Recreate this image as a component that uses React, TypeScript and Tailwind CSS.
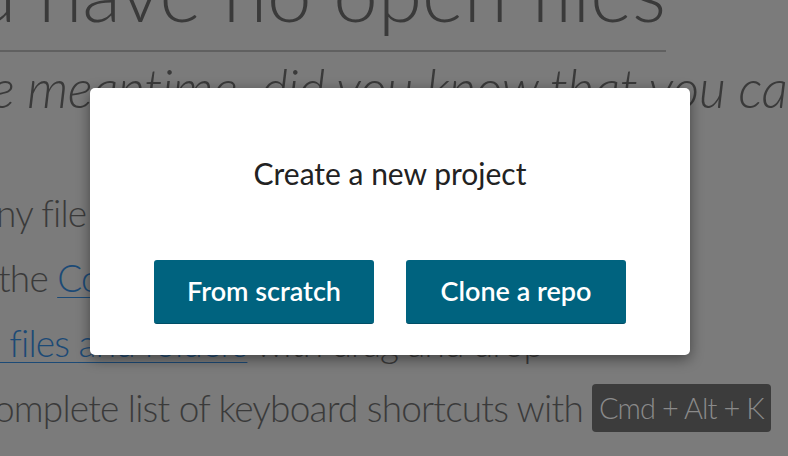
import React from 'react';

const ProjectModal: React.FC = () => {
  return (
    <div className="absolute left-[90px] top-[88px] w-[600px] h-[267px] bg-white rounded-[5px] shadow-[0_4px_14px_rgba(0,0,0,0.45)] flex flex-col items-center">
      <h2 className="mt-[67px] text-[30px] leading-[36px] text-[#222222]">Create a new project</h2>
      <div className="mt-[69px] flex gap-8">
        <button className="w-[220px] h-[64px] rounded-[3px] bg-[#00637f] border-b border-[#004e66] text-white text-[27px] font-semibold">
          From scratch
        </button>
        <button className="w-[220px] h-[64px] rounded-[3px] bg-[#00637f] border-b border-[#004e66] text-white text-[27px] font-semibold">
          Clone a repo
        </button>
      </div>
    </div>
  );
};

export default function App() {
  return (
    <div className="relative w-[788px] h-[456px] overflow-hidden bg-[#7b7b7b] text-[#3a3a3a] font-['Lato','Liberation_Sans',sans-serif]">
      <div className="flex flex-col">
        <div className="mt-[-49px] flex w-[666px] justify-end">
          <h1 className="whitespace-nowrap text-[80px] leading-none font-light">You have no open files</h1>
        </div>
        <div className="mt-[19px] w-[666px] h-[2px] bg-[#606060]" />
        <p className="mt-[9px] -ml-[10px] whitespace-nowrap text-[53px] leading-none font-light italic tracking-[-0.6px]">
          e meantime, did you know that you can:
        </p>
        <ul className="mt-[66px] text-[37px] leading-[65px] font-light whitespace-nowrap tracking-[-0.8px]">
          <li className="-ml-[4px]">ny file from the sidebar</li>
          <li className="-ml-[2px]">
            the <a className="underline underline-offset-[5px] decoration-1 text-[#1c4a76]">Command Palette</a>
          </li>
          <li>
            <a className="underline underline-offset-[5px] decoration-1 text-[#1c4a76]">&nbsp;files and folders</a> with drag and drop
          </li>
          <li className="-ml-[6px] flex items-center gap-[9px]">
            omplete list of keyboard shortcuts with
            <kbd className="rounded-[4px] bg-[#3c3c3c] px-[7px] text-[29px] leading-[48px] tracking-[-0.9px] text-[#8a8a8a] font-['Lato','Liberation_Sans',sans-serif]">
              Cmd + Alt + K
            </kbd>
          </li>
        </ul>
      </div>
      <ProjectModal />
    </div>
  );
}
